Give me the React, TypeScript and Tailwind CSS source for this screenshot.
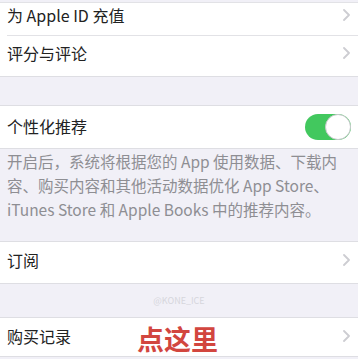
import React from "react";

const font = { fontFamily: '"Noto Sans CJK SC", "Noto Sans", sans-serif' };

function Chevron() {
  return (
    <svg width="7" height="12" viewBox="0 0 7 12" className="shrink-0">
      <path d="M1 1 L6 6 L1 11" fill="none" stroke="#cdcdd2" strokeWidth="1.8" strokeLinecap="round" strokeLinejoin="round" />
    </svg>
  );
}

function Row({ title, className = "", children }: { title: string; className?: string; children?: React.ReactNode }) {
  return (
    <div className={`relative flex items-center justify-between bg-white pl-[7px] pr-[8px] ${className}`}>
      <span className="text-[16px] leading-[22px] text-[#222222]">{title}</span>
      {children ?? <Chevron />}
    </div>
  );
}

export default function App() {
  return (
    <div className="w-[358px] h-[359px] overflow-hidden bg-[#f1f0f7]" style={font}>
      <div className="h-[3px] border-b border-[#e2e2e6]" />
      <div className="bg-white">
        <div className="flex h-[32px] items-start justify-between pl-[7px] pr-[8px]">
          <span className="mt-[1px] text-[16px] leading-[22px] text-[#222222]">为 Apple ID 充值</span>
          <div className="mt-[6px]"><Chevron /></div>
        </div>
        <div className="ml-[7px] h-px bg-[#e2e2e6]" />
        <Row title="评分与评论" className="h-[40px] pb-[7px]" />
      </div>
      <div className="h-[29px] border-t border-[#dedee3]" />
      <Row title="个性化推荐" className="h-[44px] border-y border-[#dedee3] pb-[2px]">
        <div className="relative mt-[2px] h-[26px] w-[46px] rounded-full bg-[#42c85e] mr-[-1px]">
          <div className="absolute right-0 top-0 h-[26px] w-[26px] rounded-full border border-[#c8c8cc] bg-white" />
        </div>
      </Row>
      <div className="h-[92px] pl-[7px] text-[15.5px] leading-[24px] text-[#8e8e93]">
        <div className="whitespace-nowrap">开启后，系统将根据您的 App 使用数据、下载内</div>
        <div className="whitespace-nowrap">容、购买内容和其他活动数据优化 App Store、</div>
        <div className="whitespace-nowrap">iTunes Store 和 Apple Books 中的推荐内容。</div>
      </div>
      <Row title="订阅" className="h-[43px] border-y border-[#dedee3] pb-[5px]" />
      <div className="flex h-[33px] items-center justify-center">
        <span className="text-[9px] text-[#d6d6dc]">@KONE_ICE</span>
      </div>
      <Row title="购买记录" className="h-[40px] border-y border-[#dedee3] pb-[3px]">
        <>
          <span className="absolute left-[137px] top-[4px] text-[27px] font-bold leading-[34px] text-[#d2463f]">点这里</span>
          <Chevron />
        </>
      </Row>
    </div>
  );
}
